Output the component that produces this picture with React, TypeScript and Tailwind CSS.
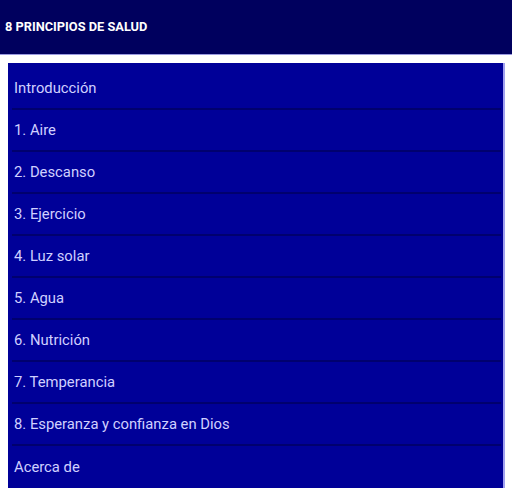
const items = [
  "Introducción",
  "1. Aire",
  "2. Descanso",
  "3. Ejercicio",
  "4. Luz solar",
  "5. Agua",
  "6. Nutrición",
  "7. Temperancia",
  "8. Esperanza y confianza en Dios",
  "Acerca de",
];

export default function App() {
  return (
    <div className="h-[489px] overflow-hidden bg-white font-['Roboto',sans-serif]">
      <header className="flex h-[55px] items-center border-b border-[#9a9ae0] bg-[#00005e] px-[5px]">
        <h1 className="text-[12.8px] font-bold text-white">8 PRINCIPIOS DE SALUD</h1>
      </header>
      <div className="px-[8px] pt-[8px] pr-[7px]">
        <ul className="border-r-2 border-[#a0a0f0] bg-[#000098] pt-[5px]">
          {items.map((item, i) => (
            <li key={item} className="pl-[4px] pr-[2px]">
              <div
                className={
                  "flex h-[42px] items-center px-[2px] text-[14.8px] text-[#d0d0ff] " +
                  (i < items.length - 1 ? "border-b-2 border-[#00006e]" : "")
                }
              >
                {item}
              </div>
            </li>
          ))}
        </ul>
      </div>
    </div>
  );
}
